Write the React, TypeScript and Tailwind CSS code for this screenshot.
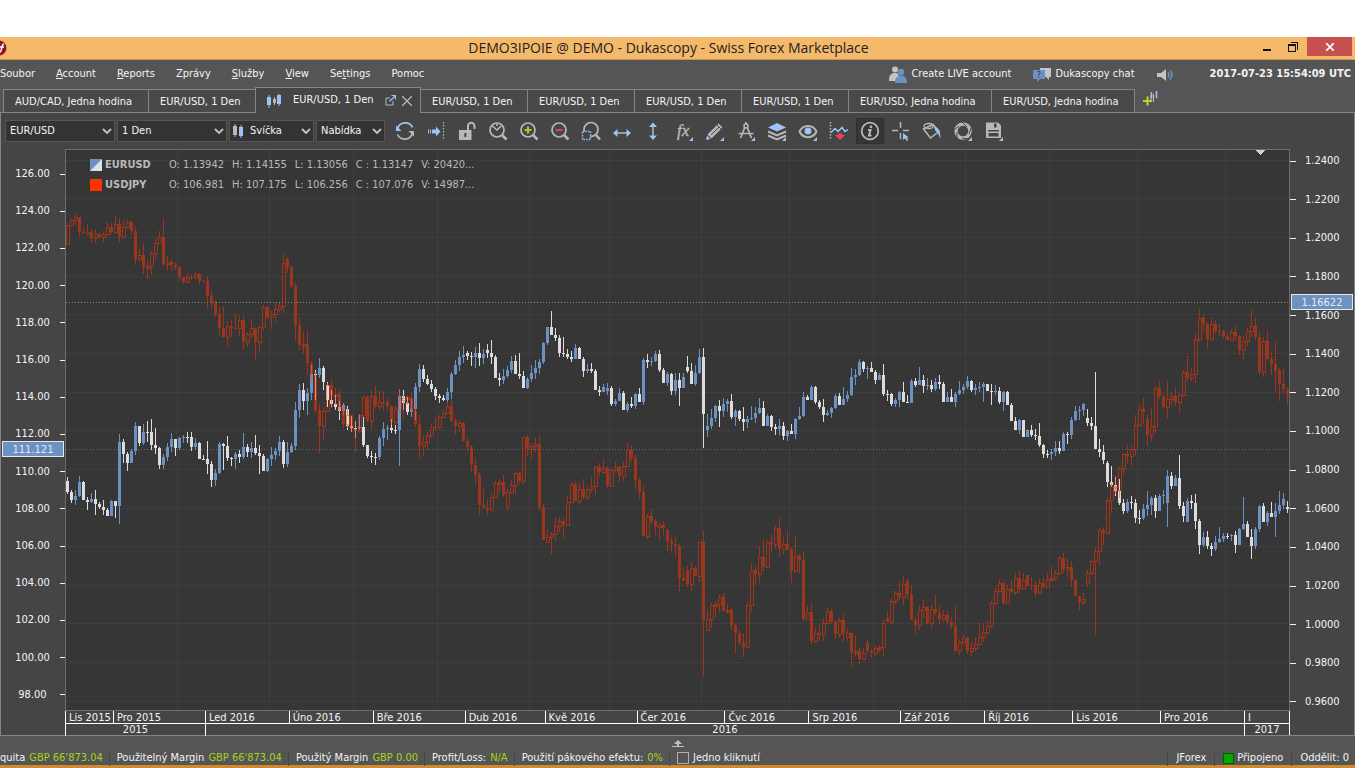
import type { ReactNode } from "react"

type Candle = { x: number; open: number; close: number; high: number; low: number }

// close,high,low[,open] in plot units, the open defaults to the previous close
const EURUSD = `
492,477,494,481 500,490,503 496,490,505 482,476,497 500,481,500 502,497,510 499,493,503 504,490,515 507,502,509 510,500,515
516,508,516 501,500,516 506,501,518 442,434,524 454,439,463 463,452,471 451,449,463 426,422,455 443,426,446 432,424,445
432,421,442 445,419,450 448,428,454 465,447,469 457,454,469 447,443,461 439,433,452 448,439,456 438,437,450 437,435,443
437,432,443 447,432,451 443,438,450 459,442,459 459,455,460 464,441,474 480,461,487 473,469,486 444,442,474 446,443,470
458,436,461 459,457,466 454,452,469 457,450,463 447,433,459 452,444,457 448,442,458 453,435,455 456,445,474 471,454,471
459,458,472 455,447,466 451,448,460 442,436,456 464,440,468 452,442,467 446,443,453 410,402,450 390,384,418 401,383,410
393,388,415 374,365,400 375,370,400 368,358,378 382,366,390 400,382,407,385 404,390,407 407,395,410 411,401,420 405,403,415
426,406,430,409 428,416,432 428,421,438 427,414,430 445,417,447 456,446,458 457,451,463 457,453,465 438,436,460 429,422,446
428,425,440 430,419,433 430,425,434 396,389,466 403,390,410 412,397,415 409,399,417 387,383,420 369,364,392 379,365,382
384,375,385 389,380,392 396,387,400 398,394,403 400,395,401 392,388,402 374,372,399 365,360,375 357,351,371 355,346,363
356,351,360,353 357,352,366 353,347,368 358,343,366 354,349,364 353,344,358,350 357,340,364 378,355,378 380,373,386 376,369,384
370,366,378 361,356,373 374,355,374 376,353,379 388,371,388 379,377,389 373,365,382 368,360,379 362,359,374 343,342,364
327,327,345 335,311,335 338,328,341 353,335,357 354,337,357 357,349,359 359,351,362 348,344,359 359,347,359 371,357,377
369,364,373 371,363,373 390,369,390 392,386,396 387,384,392 388,383,395,391 404,386,406 401,399,406 393,388,401 410,391,410
404,402,412 406,397,408 394,393,409 402,388,402 360,358,405 362,354,368 361,357,366 354,351,362 370,350,372 383,368,383
374,372,386 391,373,395 380,373,395 388,373,406 377,373,388 371,356,373,367 384,363,384 373,365,386 357,349,374 414,348,448
426,414,437,430 418,409,429 406,405,422 411,400,427 404,398,417 401,399,412 417,394,419 411,409,426 419,410,421 422,407,431
419,416,428 418,406,420 413,407,423 408,398,414 426,401,426 416,414,424 427,415,431 429,424,435 426,419,435 436,422,440
431,430,441 434,424,434 419,418,439 416,407,420 397,392,417 400,395,400 387,385,400 402,386,404 407,400,409 415,399,422
413,410,416 408,407,418 396,394,409 405,393,405 399,387,405 395,391,402 377,368,396 375,369,385 362,359,376 369,361,372
368,366,379 372,362,372 380,370,384 375,373,380 394,364,396 394,390,401 404,393,406 400,398,407 392,391,407 402,382,402
403,395,403 381,379,403 385,378,387 380,367,385 386,375,393 385,378,390 389,380,392 382,378,391 384,375,389 402,382,402
397,392,402 402,389,402 394,392,407 390,381,395 387,384,394 381,376,389 390,380,392 388,384,395 387,382,392 384,382,402
391,384,391 392,384,405 391,385,395 402,387,404 392,391,411 405,391,405 421,403,421 430,417,430 420,419,434 437,420,437
430,429,437 435,425,437 436,429,440 445,423,447 454,444,458 454,450,458 452,449,460 448,441,456 451,441,454 434,432,451
435,432,444 420,417,439 411,406,421 410,406,420 404,403,416 423,409,426,418 426,417,430 449,372,449 452,439,457 460,445,464
482,461,487,463 485,466,487 491,477,496 503,479,505 511,499,514 502,499,513 503,496,509 518,499,523 518,510,524 509,504,520
505,491,516 498,496,515 511,495,518 496,494,511 495,490,504 476,470,527,503 486,472,489 478,475,486 506,455,509 516,502,522
501,498,522,522 503,495,509 521,494,529 545,519,554 537,532,547 546,531,549 549,543,556 542,536,551 539,527,543 536,533,542
536,533,539 535,534,541 545,531,553 529,528,545 524,497,530 537,521,537 546,529,559 529,527,549 506,505,532 522,503,522
513,511,526 517,502,517 511,503,537 505,491,514 499,493,509 509,501,513,507`

const USDJPY = `
225,223,245,244 220,218,227 217,214,225 232,217,236 233,227,234 232,224,233 238,229,242 234,230,243 237,233,238 234,231,242
227,222,235 232,223,234 224,216,233 237,218,242 227,221,238 222,220,228 231,221,235 259,227,265 255,249,261 267,243,274
266,259,279 253,251,275 243,239,260 237,231,244 264,218,266 262,256,270 265,260,271 267,263,270 277,266,281 282,277,284
277,273,283 277,274,280 274,272,279 281,273,285 281,280,281 296,276,308 303,290,308 314,300,317 328,307,335 337,306,337
326,321,347 328,320,337 328,314,329 320,316,336 342,316,350 334,332,347 328,319,338 342,327,360 327,325,351 307,305,330
317,306,319 314,310,329 309,303,322 306,303,312 263,253,313 267,257,273,259 286,265,288 325,283,340 345,317,350 344,332,354
363,330,375 375,361,382 410,372,413 426,404,453 411,407,440 385,383,410 395,380,408 394,388,405 410,390,413 424,405,428
415,408,428 429,415,432 431,421,452 415,414,433 397,396,417 421,396,422 396,391,430 406,386,409 402,391,410 402,391,410
406,397,410 422,405,425 409,406,425 400,389,412 398,395,420 397,395,405 411,393,413 424,399,427 446,415,459 442,435,456
435,432,450 427,424,438 427,417,431 417,415,430 413,410,418 406,402,414 421,400,422 426,418,434 423,420,432 441,422,441
447,437,451 465,445,472 475,458,484 505,472,515 508,487,508 510,499,515 497,493,510 483,481,498 482,479,492 495,475,497
492,489,511,506 485,480,494 473,472,494 481,472,484 437,437,485 449,435,456 446,443,459 444,438,452 507,435,511 540,504,540
537,529,543,542 534,532,554 526,518,541 521,517,532 525,518,538 502,496,526 484,482,503 501,482,501 489,482,504 497,479,499
489,487,500 486,477,493 467,466,495 472,463,477 468,459,474 486,466,488 470,468,486 467,462,473 476,466,482 466,462,481
450,443,464 458,445,462 480,455,489 492,478,499 536,486,536 516,514,539 521,509,524 527,519,535 525,523,541 528,521,535
541,529,551,530 544,537,553 546,537,556 578,544,591 581,567,581 584,566,587,570 568,562,591 576,566,576 542,542,582 620,530,677
619,610,631,630 605,603,628 604,602,617 597,595,613 611,593,611 610,604,612 625,608,630 633,623,654 643,630,646 647,633,657
605,602,648 570,564,612 574,566,585 557,546,583 567,539,571 542,540,559 544,535,552 528,526,549 549,517,557 544,537,554
549,531,551 571,547,583 556,535,572 560,554,574 619,552,621 612,606,620 641,604,645 633,627,643 635,625,641 623,618,641
611,607,623 622,609,624 634,620,639 620,618,638 633,614,642 633,629,641,637 652,632,666 651,635,657 659,647,664 653,648,660
651,639,653,643 653,649,658 648,645,656 647,645,652 623,620,656 622,612,622,618 601,598,625 593,591,604 597,582,600 584,576,605
594,579,599,581 620,585,620 625,617,635 610,606,630 607,599,619 623,606,624 609,605,629 613,594,615 619,605,625 615,610,622
622,611,624 626,617,629 651,605,651 642,639,655 638,634,645 651,636,654 648,642,656 644,637,651 637,622,647 632,623,642
626,620,635 603,601,628 591,587,605 583,579,593 603,581,605 589,585,598 592,580,593 578,573,595 589,570,594 580,573,590
585,575,587,575 585,577,590 593,581,597 583,579,594 587,578,588 579,573,588 578,566,582 573,570,581 558,556,575 569,553,573
567,559,577 580,561,587 596,579,596 602,595,610 599,593,605 573,570,587,583 561,560,575 551,547,635 530,528,565 533,527,545
500,497,532 486,483,513 490,475,494 468,467,498 454,453,475 456,445,463 449,445,466 425,415,455 409,405,427 412,398,424
435,415,446,419 426,408,441 388,386,433 396,381,399 407,393,409 399,381,418 396,392,405 402,388,406 395,393,413 372,370,397
378,356,381 374,368,381 339,333,383 318,309,342 324,314,332 339,322,349 324,317,341 331,320,334 331,324,336 336,330,338
340,333,340 332,329,341 336,325,340 350,335,355 341,336,359 331,328,346 326,310,337 337,318,340 372,332,374 341,337,377
359,330,359 364,352,375 371,342,392 384,368,401 389,369,394 394,387,404,390`

function parseCandles(source: string): Candle[] {
  let prev = 0
  return source.trim().split(/\s+/).map((item, i) => {
    const [close, high, low, first] = item.split(",").map(Number)
    const open = first ?? prev
    prev = close
    return { x: 67 + i * 4, open, close, high, low }
  })
}

const eurusd = parseCandles(EURUSD)
const usdjpy = parseCandles(USDJPY)

const box = (x: number, y: number, w: number, h: number) => `M${x} ${y}h${w}v${h}h${-w}z`

function solid(c: Candle) {
  const top = Math.min(c.open, c.close)
  const height = Math.max(Math.abs(c.open - c.close), 1)
  return box(c.x - 1, top, 3, height) + box(c.x, c.high, 1, c.low - c.high)
}

function hollow(c: Candle) {
  const height = Math.max(c.open - c.close, 2)
  const above = c.high < c.close ? box(c.x, c.high, 1, c.close - c.high) : ""
  const below = c.low > c.open ? box(c.x, c.open, 1, c.low - c.open) : ""
  return (
    box(c.x - 1, c.close, 4, 1) +
    box(c.x - 1, c.close + height, 4, 1) +
    box(c.x - 1, c.close, 1, height) +
    box(c.x + 2, c.close, 1, height) +
    above +
    below
  )
}

const isUp = (c: Candle) => c.close < c.open
const eurUp = eurusd.filter(isUp).map(solid).join("")
const eurDown = eurusd.filter((c) => !isUp(c)).map(solid).join("")
const jpyPath = usdjpy.map((c) => (isUp(c) ? hollow(c) : solid(c))).join("")

const gridX = [177, 269, 353, 437, 529, 609, 701, 789, 873, 965, 1049, 1137, 1225]
const gridY = [160, 198, 237, 276, 314, 353, 392, 430, 469, 508, 546, 585, 623, 662, 701]

const leftScale = Array.from({ length: 15 }, (_, i) => (126 - i * 2).toFixed(2))
const rightScale = Array.from({ length: 15 }, (_, i) => (1.24 - i * 0.02).toFixed(4))

const months = [
  "Lis 2015", "Pro 2015", "Led 2016", "Úno 2016", "Bře 2016", "Dub 2016", "Kvě 2016", "Čer 2016",
  "Čvc 2016", "Srp 2016", "Zář 2016", "Říj 2016", "Lis 2016", "Pro 2016", "I",
]

const menu = [
  ["", "", "Soubor"],
  ["", "A", "ccount"],
  ["", "R", "eports"],
  ["Zprávy", "", ""],
  ["", "S", "lužby"],
  ["", "V", "iew"],
  ["Se", "t", "tings"],
  ["Pomoc", "", ""],
]

const G = "#b8b8b8"
const B = "#9cc4f6"

function Icon({ children, size = 20 }: { children: ReactNode; size?: number }) {
  return (
    <svg width={size} height={size} viewBox="0 0 20 20" fill="none" stroke={G} strokeWidth="1.5" className="block shrink-0">
      {children}
    </svg>
  )
}

const corner = <path d="M19 16v4h-4z" fill={B} stroke="none" />
const lens = (
  <>
    <circle cx="9" cy="9" r="7" strokeWidth="1.7" />
    <path d="M14 14l4.500 4.500" strokeWidth="2.600" />
  </>
)

const tools: { label: string; active?: boolean; icon: ReactNode }[] = [
  {
    label: "Refresh",
    icon: (
      <>
        <path d="M2.500 8A8 8 0 0 1 17.500 6.500" stroke={B} strokeWidth="1.700" />
        <path d="M1 4.500V10h5.500z" fill={B} stroke="none" />
        <path d="M17.500 12A8 8 0 0 1 2.500 13.500" strokeWidth="1.700" />
        <path d="M19 15.500V10h-5.500z" fill={G} stroke="none" />
      </>
    ),
  },
  {
    label: "Shift",
    icon: (
      <>
        <path d="M2.500 8.500v4M4.500 8.500v4" stroke={B} strokeWidth="1" />
        <path d="M6 8.500h4V5.500l4.500 5-4.500 5v-3H6z" fill={B} stroke="none" />
        <path d="M17.500 1v18" strokeDasharray="1.500 1.500" strokeWidth="1.200" />
      </>
    ),
  },
  {
    label: "Lock",
    icon: (
      <>
        <path d="M2 9h12.500v10H2z" fill={G} stroke="none" />
        <path d="M11 9V5a3 3 0 0 1 6.500 0v3" strokeWidth="2" />
        <path d="M8.300 12v4" stroke="#454545" strokeWidth="2" />
      </>
    ),
  },
  { label: "Zoom time", icon: <>{lens}<path d="M4.500 5l4.500 4 4-4M9 3v2" stroke={B} /></> },
  { label: "Zoom in", icon: <>{lens}<path d="M9 5.500v7M5.500 9h7" stroke="#a8cc2c" strokeWidth="2.200" /></> },
  { label: "Zoom out", icon: <>{lens}<path d="M5.500 9h7" stroke="#d04858" strokeWidth="2.200" /></> },
  {
    label: "Zoom area",
    icon: (
      <>
        <circle cx="10" cy="8.500" r="7" strokeWidth="1.700" />
        <path d="M15 14l4 4.500" strokeWidth="2.600" />
        <path d="M1.500 10.500h8v8h-8z" fill="#454545" stroke={B} strokeWidth="1.500" strokeDasharray="1.500 1.200" />
      </>
    ),
  },
  { label: "Fit width", icon: <><path d="M4 12h12" /><path d="M1 12l4.500-4v8zM19 12l-4.500-4v8z" fill={B} stroke="none" /></> },
  { label: "Fit height", icon: <><path d="M10 5v11" /><path d="M10 1.500L6 6h8zM10 19l-4-4.500h8z" fill={B} stroke="none" /></> },
  {
    label: "Indicators",
    icon: (
      <>
        <text x="3" y="15" fontSize="17" fontStyle="italic" fontFamily="Liberation Serif, serif" fill={G} strokeWidth="0.4">fx</text>
        {corner}
      </>
    ),
  },
  {
    label: "Draw",
    icon: (
      <>
        <path d="M13.500 2.500l4 4L6.500 17.500 2.500 13.500z" fill={G} stroke="none" />
        <path d="M14 6L6 14" stroke="#454545" strokeWidth="1" />
        <path d="M12 4l4 4" stroke="#454545" strokeWidth="1" />
        <path d="M2 14.500L1 19l4.500-1z" fill={B} stroke="none" />
        {corner}
      </>
    ),
  },
  {
    label: "Measure",
    icon: (
      <>
        <path d="M10 1v3M9 6L4.500 17M11 6l4.500 11M2.500 12.500h15" strokeWidth="1.700" />
        <circle cx="10" cy="5" r="2" />
        {corner}
      </>
    ),
  },
  {
    label: "Layers",
    icon: (
      <>
        <path d="M1 6.500L10 2l9 4.500-9 4z" fill={B} stroke="none" />
        <path d="M1 10.500l9 4 9-4M1 14.500l9 4 9-4" strokeWidth="2" />
        {corner}
      </>
    ),
  },
  {
    label: "Visibility",
    icon: (
      <>
        <path d="M1.500 10.500C5 3 15 3 18.500 10.500 15 18 5 18 1.500 10.500z" strokeWidth="2" />
        <circle cx="10" cy="10" r="3.500" fill={B} stroke="none" />
        {corner}
      </>
    ),
  },
  {
    label: "Orders",
    icon: (
      <>
        <path d="M1.500 1v18" strokeDasharray="1.500 1.500" />
        <path d="M2 11.500l4-4 3 3 4-4 3 4 3-2" stroke={B} />
        <path d="M6 14h3v-1.500h4V14h3l-5 5z" fill="#f04050" stroke="none" />
      </>
    ),
  },
  {
    label: "Information",
    active: true,
    icon: (
      <>
        <circle cx="10" cy="10" r="8.300" strokeWidth="1.800" />
        <circle cx="11" cy="5.800" r="1.400" fill={G} stroke="none" />
        <path d="M8 9h2.500L9 14.500h2.500" strokeWidth="2" />
      </>
    ),
  },
  {
    label: "Crosshair",
    icon: <><path d="M9.500 1v6M9.500 12v6M1 9.500h6M12 9.500h6" /><path d="M12 12v7l2-1.500 2 2.500 1.500-1-2-2.500H18z" fill={B} stroke="none" /></>,
  },
  {
    label: "Fill",
    icon: (
      <>
        <path d="M1.500 8l9.500-4.500 6 7L8.500 17z" />
        <ellipse cx="6.500" cy="5" rx="4.500" ry="2.500" strokeWidth="1.300" />
        <path d="M12 6c4.500 0 6.500 4 6.500 12-1.500-4-3-7-5-8z" fill={B} stroke="none" />
      </>
    ),
  },
  {
    label: "Snapshot",
    icon: (
      <>
        <circle cx="10" cy="10" r="7" strokeWidth="3.500" />
        <path d="M9 1l5 5M18 7l-2 6M15 18l-6-1M4 17l0-6M1 9l5-4" stroke="#454545" strokeWidth="1" />
        {corner}
      </>
    ),
  },
  {
    label: "Save",
    icon: (
      <>
        <path d="M2 1.500h12l3 3V17H2z" fill={G} stroke="none" />
        <path d="M10 2.500h2.500v4H10zM4 9h11v1.500H4zM4.500 12h10v3.500h-10z" fill="#454545" stroke="none" />
        {corner}
      </>
    ),
  },
]

function PlainTab({ label, wide }: { label: string; wide?: boolean }) {
  return (
    <button
      className={`mt-0.5 h-6 shrink-0 whitespace-nowrap border-t border-r border-b border-[#858585] bg-[#494949] pt-0.5 pl-[11px] text-left ${wide ? "w-[143px]" : "w-[107px]"}`}
    >
      {label}
    </button>
  )
}

function Picker({ label, value, width, icon }: { label: string; value: string; width: string; icon?: ReactNode }) {
  return (
    <div className={`relative shrink-0 ${width}`}>
      <select
        aria-label={label}
        className={`block h-[22px] w-full appearance-none border border-[#555] bg-[#333] text-[11px] text-gray-100 outline-none ${icon ? "pl-5" : "pl-1"}`}
      >
        <option>{value}</option>
      </select>
      {icon && <span className="pointer-events-none absolute top-[3px] left-1">{icon}</span>}
      <svg width="10" height="6" viewBox="0 0 10 6" className="pointer-events-none absolute top-2 right-[3px]">
        <path d="M1 1l4 4 4-4" fill="none" stroke="#c4c4c4" strokeWidth="1.800" />
      </svg>
    </div>
  )
}

function LegendRow({ name, values, swatch }: { name: string; values: string[]; swatch: ReactNode }) {
  return (
    <div className="flex h-5 items-center">
      <svg width="12" height="12" className="mr-[3px]">{swatch}</svg>
      <span className="w-16 font-bold">{name}</span>
      <span className="flex gap-2 whitespace-pre">
        {values.map((v) => <span key={v}>{v}</span>)}
      </span>
    </div>
  )
}

function Chart() {
  return (
    <div className="relative min-h-0 flex-1 border border-b-0 border-[#6c6c6c] bg-[#363636]">
      <svg
        viewBox="66 150 1223 560"
        preserveAspectRatio="none"
        shapeRendering="crispEdges"
        className="absolute inset-0 h-full w-full"
      >
        <g fill="#3e3e3e">
          {gridX.map((x) => <rect key={x} x={x} y="150" width="1" height="560" />)}
          {gridY.map((y) => <rect key={y} x="66" y={y} width="1223" height="1" />)}
        </g>
        <path d="M66 302.500H1289" stroke="#8c8c8c" strokeDasharray="1 2" />
        <path d="M66 449.500H1289" stroke="#666" strokeDasharray="1 2" />
        <path d={eurUp} fill="#6c92c4" />
        <path d={eurDown} fill="#dcdcdc" />
        <g opacity="0.5">
          <path d={jpyPath} fill="#ff3300" />
        </g>
        <path d="M1255 150h11l-5.500 5z" fill="#d0d0d0" />
      </svg>
      <div className="absolute top-[5px] left-6 text-[11px] text-[#b9b9b9]">
        <LegendRow
          name="EURUSD"
          values={["O: 1.13942", "H: 1.14155", "L: 1.13056", "C : 1.13147", "V: 20420..."]}
          swatch={<><path d="M0 0h12v12H0z" fill="#e0e0e0" /><path d="M0 0h12L0 12z" fill="#6c92c4" /></>}
        />
        <LegendRow
          name="USDJPY"
          values={["O: 106.981", "H: 107.175", "L: 106.256", "C : 107.076", "V: 14987..."]}
          swatch={<path d="M0 0h12v12H0z" fill="#ff3300" />}
        />
      </div>
    </div>
  )
}

function TimeScale() {
  return (
    <div className="shrink-0 border-t border-[#707070] text-[11px] leading-3">
      <div className="grid h-[13px] grid-cols-[48fr_92fr_84fr_84fr_92fr_80fr_92fr_88fr_84fr_92fr_84fr_88fr_88fr_84fr_45fr] border-r border-b border-white leading-[13px]">
        {months.map((m, i) => (
          <span key={i} className="h-3 min-w-0 whitespace-nowrap border-l border-white pl-[3px]">{m}</span>
        ))}
      </div>
      <div className="grid h-[11px] grid-cols-[140fr_1040fr_45fr] border-r border-white text-center">
        <span className="border-l border-white">2015</span>
        <span className="border-l border-white">2016</span>
        <span className="border-l border-white">2017</span>
      </div>
    </div>
  )
}

function Balance({ label, value }: { label: string; value: string }) {
  return (
    <div className="mr-[7px] flex gap-1 border-r border-[#484848] pr-1.5">
      <span>{label}</span>
      <span className="text-[#a6d31c]">{value}</span>
    </div>
  )
}

export default function App() {
  return (
    <div className="flex min-h-screen flex-col overflow-hidden bg-white pt-[37px] pr-[11px] font-['DejaVu_Sans_Condensed','DejaVu_Sans',sans-serif] text-[11px] text-gray-100">
      {/* Title bar */}
      <header className="flex h-[23px] shrink-0 items-center border-b border-[#c9995a] bg-[#f4b96b]">
        <svg width="8" height="16" viewBox="0 0 8 16" className="shrink-0">
          <circle cx="-1" cy="8" r="7.500" fill="#8e1622" />
          <path d="M0 12c2 0 1-8 4-8M0 7h4" stroke="#fff" strokeWidth="1.500" fill="none" />
        </svg>
        <h1 className="flex-1 pl-[74px] text-center font-['Open_Sans',sans-serif] text-[14px] leading-5 text-[#222]">
          DEMO3IPOIE @ DEMO - Dukascopy - Swiss Forex Marketplace
        </h1>
        <div className="flex h-full items-start">
          <button aria-label="Minimize" className="flex h-[19px] w-6 items-center justify-center">
            <svg width="8" height="10"><path d="M0 8h8" stroke="#111" strokeWidth="2" /></svg>
          </button>
          <button aria-label="Restore" className="flex h-[19px] w-7 items-center justify-center">
            <svg width="10" height="10" fill="none" stroke="#111" shapeRendering="crispEdges">
              <path d="M.500 2.500h7v7h-7zM.500 3.500h7M2.500.500h7v7" />
            </svg>
          </button>
          <button aria-label="Close" className="flex h-[19px] w-[45px] items-center justify-center bg-[#c75050]">
            <svg width="8" height="8"><path d="M0 0l8 8M8 0L0 8" stroke="#fff" strokeWidth="1.700" /></svg>
          </button>
          <span className="w-[3px]" />
        </div>
      </header>

      {/* Menu */}
      <div className="flex h-[27px] shrink-0 items-center bg-[#555] pt-0.5">
        <nav className="flex flex-1 gap-[21px]">
          {menu.map(([before, key, after]) => (
            <button key={before + key + after}>{before}<u>{key}</u>{after}</button>
          ))}
        </nav>
        <button className="mr-[22px] flex items-center gap-1">
          <svg width="18" height="18" viewBox="0 0 18 18">
            <circle cx="6" cy="3.500" r="3" fill="#c4c4c4" />
            <path d="M0 15c0-6 2-8 6-8s4 2 4 8z" fill="#c4c4c4" />
            <circle cx="12" cy="6" r="3.200" fill="#6c92c4" />
            <path d="M6 17c0-5 2-7.500 6-7.500s6 2.500 6 7.500z" fill="#6c92c4" />
          </svg>
          Create LIVE account
        </button>
        <button className="mr-[22px] flex items-center gap-1">
          <svg width="18" height="14" viewBox="0 0 18 14">
            <path d="M7 0h11v9h-2v3l-3-3H7z" fill="#c4c4c4" />
            <path d="M0 2h12v9H7l-3 3v-3H0z" fill="#6c92c4" />
            <text x="4" y="10" fontSize="8" fill="#333">?</text>
          </svg>
          Dukascopy chat
        </button>
        <button aria-label="Sound" className="mr-9">
          <svg width="17" height="12" viewBox="0 0 17 12" className="block">
            <path d="M0 4h4l5-4v12L4 8H0z" fill="#c4c4c4" />
            <path d="M11 3.500q2 2.500 0 5M13 1.500q4 4.500 0 9" fill="none" stroke="#6c92c4" strokeWidth="1.500" />
          </svg>
        </button>
        <time className="mr-1 font-bold">2017-07-23 15:54:09 UTC</time>
      </div>

      {/* Chart tabs */}
      <div className="flex h-[26px] shrink-0 bg-[#555]">
        <span className="w-[3px] border-b border-[#858585]" />
        <button className="mt-0.5 h-6 w-[146px] shrink-0 whitespace-nowrap border border-[#858585] bg-[#494949] pt-0.5 pl-[11px] text-left">
          AUD/CAD, Jedna hodina
        </button>
        <button className="mt-0.5 h-6 w-[106px] shrink-0 whitespace-nowrap border-t border-b border-[#858585] bg-[#494949] pt-0.5 pl-[11px] text-left">
          EUR/USD, 1 Den
        </button>
        <div className="flex h-[26px] w-[166px] shrink-0 items-center border-t border-r border-l border-[#858585] bg-[#454545] pr-2 pl-[11px]">
          <svg width="14" height="14" viewBox="0 0 14 14" fill={B} className="mr-3 shrink-0">
            <path d="M0 3h4v8H0zM1.500 1h1v13h-1zM10 1h4v9h-4zM11.500 0h1v12h-1z" />
            <path d="M6 5h3v4H6zM7 3h1v8H7z" fill={G} />
          </svg>
          <button className="flex-1 whitespace-nowrap text-left">EUR/USD, 1 Den</button>
          <button aria-label="Detach">
            <svg width="11" height="11" viewBox="0 0 11 11" fill="none" className="mr-1.5 block">
              <path d="M5 3H1v7h7V6" stroke={G} />
              <path d="M4.500 6.500L10 1M6.500.500h4v4" stroke={B} strokeWidth="1.200" />
            </svg>
          </button>
          <button aria-label="Close tab">
            <svg width="10" height="10" className="block"><path d="M0 0l10 10M10 0L0 10" stroke={G} strokeWidth="1.300" /></svg>
          </button>
        </div>
        <PlainTab label="EUR/USD, 1 Den" />
        <PlainTab label="EUR/USD, 1 Den" />
        <PlainTab label="EUR/USD, 1 Den" />
        <PlainTab label="EUR/USD, 1 Den" />
        <PlainTab label="EUR/USD, Jedna hodina" wide />
        <PlainTab label="EUR/USD, Jedna hodina" wide />
        <div className="flex-1 border-b border-[#858585] pl-2">
          <button aria-label="New chart">
            <svg width="15" height="15" viewBox="0 0 15 15" className="mt-1 block">
              <path d="M0 10h9M4.500 5.500v9" stroke="#b4dc1c" strokeWidth="2" />
              <path d="M8 4v7M10.500 3v8" stroke={G} strokeWidth="1.200" />
              <path d="M8.500 1v6M13.500 0v7" stroke={B} strokeWidth="1.600" />
            </svg>
          </button>
        </div>
      </div>

      {/* Toolbar */}
      <div className="flex h-9 shrink-0 items-center gap-0.5 border-r border-l border-[#858585] bg-[#454545] pl-1">
        <Picker label="Instrument" value="EUR/USD" width="w-[110px]" />
        <Picker label="Period" value="1 Den" width="w-[110px]" />
        <Picker
          label="Chart type"
          value="Svíčka"
          width="w-[85px]"
          icon={
            <svg width="10" height="16" viewBox="0 0 10 16">
              <path d="M0 3h4v9H0zM1.500 1h1v13h-1z" fill={G} />
              <path d="M6 4h4v9H6zM7.500 2h1v13h-1z" fill={B} />
            </svg>
          }
        />
        <Picker label="Offer side" value="Nabídka" width="w-[69px]" />
        <div className="ml-1 flex gap-[3px]">
          {tools.map((t) => (
            <button
              key={t.label}
              aria-label={t.label}
              className={`flex h-[26px] w-7 items-center justify-center ${t.active ? "border border-[#303030] bg-[#363636]" : ""}`}
            >
              <Icon>{t.icon}</Icon>
            </button>
          ))}
        </div>
      </div>

      {/* Chart */}
      <main className="flex min-h-0 flex-1 border-r border-b border-l border-[#858585] bg-[#454545]">
        <div className="relative flex w-16 shrink-0 flex-col justify-between pt-[19px] pb-[34px] leading-3">
          {leftScale.map((v) => (
            <div key={v} className="flex items-center">
              <span className="flex-1 pl-1 text-center">{v}</span>
              <i className="h-px w-[5px] bg-gray-100" />
            </div>
          ))}
          <span className="absolute top-[292px] left-px h-4 w-[62px] border border-gray-200 bg-[#6c92c4] text-center leading-[15px] text-gray-200">
            111.121
          </span>
        </div>
        <div className="flex min-w-0 flex-1 flex-col">
          <Chart />
          <TimeScale />
        </div>
        <div className="relative flex w-16 shrink-0 flex-col justify-between pt-1.5 pb-[27px] leading-3">
          {rightScale.map((v) => (
            <div key={v} className="flex items-center gap-[9px]">
              <i className="h-px w-1.5 bg-gray-100" />
              <span>{v}</span>
            </div>
          ))}
          <span className="absolute top-[145px] left-px h-4 w-[62px] border border-gray-200 bg-[#6c92c4] text-center leading-[15px] text-gray-200">
            1.16622
          </span>
        </div>
      </main>

      {/* Status bar */}
      <footer className="shrink-0 border-b-[3px] border-[#cf8a30] bg-[#555]">
        <button aria-label="Expand panel" className="mx-auto block pt-1">
          <svg width="12" height="7" viewBox="0 0 12 7" className="block">
            <path d="M6 0l4 4H2zM5 4h2v2H5zM0 6h12v1H0z" fill="#c0c0c0" />
          </svg>
        </button>
        <div className="flex h-[18px] items-center pt-1 whitespace-nowrap">
          <Balance label="quita" value="GBP 66'873.04" />
          <Balance label="Použitelný Margin" value="GBP 66'873.04" />
          <Balance label="Použitý Margin" value="GBP 0.00" />
          <Balance label="Profit/Loss:" value="N/A" />
          <Balance label="Použití pákového efektu:" value="0%" />
          <label className="flex items-center gap-1">
            <input type="checkbox" className="h-3 w-3 appearance-none border border-[#b0b0b0]" />
            Jedno kliknutí
          </label>
          <span className="ml-auto border-r border-l border-[#484848] px-2">JForex</span>
          <span className="flex items-center gap-[3px] border-r border-[#484848] px-2">
            <i className="h-[11px] w-[11px] border border-[#006000] bg-[#00a800]" />
            Připojeno
          </span>
          <span className="pr-1.5 pl-2">Oddělit: 0</span>
        </div>
      </footer>
    </div>
  )
}
